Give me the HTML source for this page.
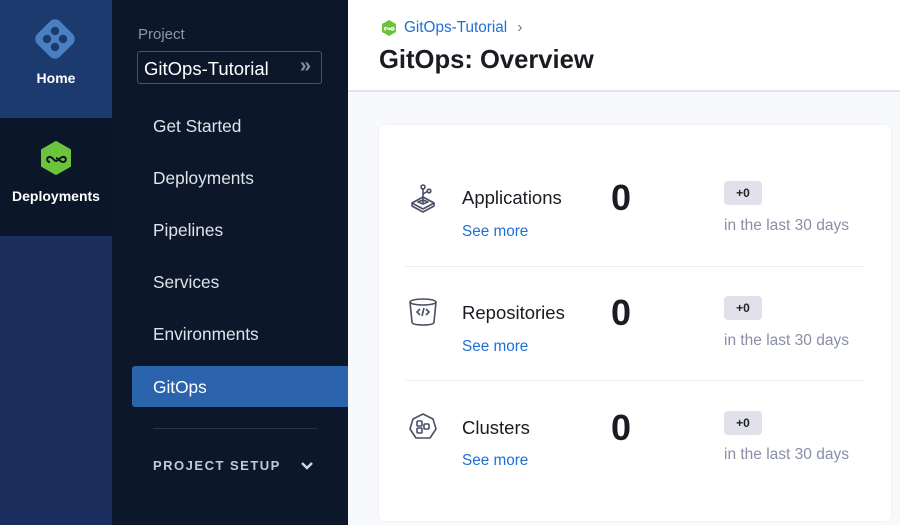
<!DOCTYPE html>
<html><head><meta charset="utf-8"><style>
*{margin:0;padding:0;box-sizing:border-box}
body{width:900px;height:525px;overflow:hidden;font-family:"Liberation Sans",sans-serif;background:#f8f9fc;position:relative}
.abs{position:absolute}
.rail{left:0;top:0;width:112px;height:525px;background:#1b2d5c}
.home{left:0;top:0;width:112px;height:118px;background:#1c3a6e}
.dep{left:0;top:118px;width:112px;height:118px;background:#0b1629}
.rl{color:#fff;font-weight:bold;font-size:14px;width:112px;text-align:center}
.side{left:112px;top:0;width:236px;height:525px;background:#0c1729}
.nav{left:153px;color:#dfe3ea;font-size:17.3px}
.main{left:348px;top:0;width:552px;height:92px;background:#fff;border-bottom:2px solid #e3e5ea}
.card{left:379px;top:125px;width:512px;height:396px;background:#fff;border-radius:6px;box-shadow:0 0 2px rgba(0,0,0,.08)}
.t{left:462px;font-size:18.5px;color:#1b1b22}
.sm{left:462px;font-size:15.3px;color:#1f6fd4}
.z{left:611px;font-size:36px;font-weight:bold;color:#1b1b22}
.bd{left:724px;width:38px;height:24px;background:#e0e1ea;border-radius:4px;font-size:12px;font-weight:bold;text-align:center;line-height:24px;color:#222}
.l30{left:724px;font-size:15.5px;color:#8a8ea5}
.hr{left:405px;width:460px;height:1px;background:#ececf0}
</style></head><body>
<div class="abs rail"></div>
<div class="abs home"></div>
<svg class="abs" style="left:34px;top:18px" width="42" height="42" viewBox="0 0 42 42"><rect x="5" y="5" width="32" height="32" rx="7" fill="#4a7fc1" transform="rotate(45 21 21)"/><g fill="#1c3a6e"><circle cx="21" cy="13" r="4.2"/><circle cx="21" cy="29" r="4.2"/><circle cx="13" cy="21" r="4.2"/><circle cx="29" cy="21" r="4.2"/></g></svg>
<div class="abs rl" style="top:70px">Home</div>
<div class="abs dep"></div>
<svg class="abs" style="left:38px;top:140px" width="36" height="36" viewBox="0 0 36 36"><path d="M18 2 L32 10 L32 26 L18 34 L4 26 L4 10Z" fill="#6bc43c" stroke="#6bc43c" stroke-width="2" stroke-linejoin="round"/><path d="M12 22c-3 0-4-4-1-5 3-1 5 4 7 4s5-5 8-4c3 1 2 5-1 5-3 0-5-4-7-4" fill="none" stroke="#0b1629" stroke-width="2"/></svg>
<div class="abs rl" style="top:188px">Deployments</div>
<div class="abs side"></div>
<div class="abs" style="left:138px;top:26px;color:#9096a3;font-size:15px">Project</div>
<div class="abs" style="left:137px;top:51px;width:185px;height:33px;border:1px solid #4a5264;border-radius:3px;color:#fff;font-size:18.5px;padding:6px 0 0 6px">GitOps-Tutorial<span style="position:absolute;right:10px;top:3px;color:#8a8fa0;font-size:20px;font-weight:bold">»</span></div>
<div class="abs nav" style="top:116px">Get Started</div>
<div class="abs nav" style="top:168px">Deployments</div>
<div class="abs nav" style="top:220px">Pipelines</div>
<div class="abs nav" style="top:272px">Services</div>
<div class="abs nav" style="top:324px">Environments</div>
<div class="abs" style="left:132px;top:366px;width:216px;height:41px;background:#2b64ad;border-radius:3px 0 0 3px"></div>
<div class="abs nav" style="top:377px;color:#fff">GitOps</div>
<div class="abs" style="left:153px;top:428px;width:164px;height:1px;background:#2a3446"></div>
<div class="abs" style="left:153px;top:458px;color:#c5cad5;font-size:13px;letter-spacing:1.5px;font-weight:bold">PROJECT SETUP</div>
<svg class="abs" style="left:300px;top:461px" width="14" height="10" viewBox="0 0 14 10"><path d="M2 2l5 5 5-5" fill="none" stroke="#d0d4dc" stroke-width="2.5"/></svg>
<div class="abs main"></div>
<svg class="abs" style="left:380px;top:19px" width="18" height="18" viewBox="0 0 36 36"><path d="M18 2 L32 10 L32 26 L18 34 L4 26 L4 10Z" fill="#6bc43c"/><path d="M12 22c-3 0-4-4-1-5 3-1 5 4 7 4s5-5 8-4c3 1 2 5-1 5-3 0-5-4-7-4" fill="none" stroke="#fff" stroke-width="2.5"/></svg>
<div class="abs" style="left:404px;top:19px;color:#1f6fd4;font-size:15.3px">GitOps-Tutorial <span style="color:#777;margin-left:6px">›</span></div>
<div class="abs" style="left:379px;top:46px;font-size:25.6px;font-weight:bold;color:#1b1b22">GitOps: Overview</div>
<div class="abs card"></div>
<svg class="abs" style="left:408px;top:183px" width="30" height="30" viewBox="0 0 30 30" fill="none" stroke="#4a4e66" stroke-width="1.6" stroke-linejoin="round"><path d="M4 20l11-6 11 6-11 6z"/><path d="M4 20v3l11 6 11-6v-3"/><path d="M15 21V5"/><circle cx="15" cy="4" r="2"/><path d="M15 11l5-3"/><circle cx="21" cy="8" r="1.8"/><path d="M10 19l5-2 5 2-5 2z"/></svg>
<div class="abs t" style="top:187px">Applications</div>
<div class="abs sm" style="top:223px">See more</div>
<div class="abs z" style="top:177px">0</div>
<div class="abs bd" style="top:181px">+0</div>
<div class="abs l30" style="top:217px">in the last 30 days</div>
<div class="abs hr" style="top:266px"></div>
<svg class="abs" style="left:407px;top:297px" width="32" height="32" viewBox="0 0 32 32" fill="none" stroke="#4a4e66" stroke-width="1.6"><ellipse cx="16" cy="5" rx="13" ry="3"/><path d="M3 5l2 20c0 2 4 3 11 3s11-1 11-3l2-20"/><path d="M13 12l-3 3 3 3M19 12l3 3-3 3M17 11l-2 8"/></svg>
<div class="abs t" style="top:302px">Repositories</div>
<div class="abs sm" style="top:338px">See more</div>
<div class="abs z" style="top:292px">0</div>
<div class="abs bd" style="top:296px">+0</div>
<div class="abs l30" style="top:332px">in the last 30 days</div>
<div class="abs hr" style="top:380px"></div>
<svg class="abs" style="left:408px;top:412px" width="30" height="30" viewBox="0 0 30 30" fill="none" stroke="#4a4e66" stroke-width="1.6" stroke-linejoin="round"><path d="M15 2l10 5 3 10-6 9H8l-6-9 3-10z"/><rect x="9" y="9" width="5" height="5" rx="1"/><rect x="9" y="16" width="5" height="5" rx="1"/><rect x="16" y="12" width="5" height="5" rx="1"/></svg>
<div class="abs t" style="top:417px">Clusters</div>
<div class="abs sm" style="top:452px">See more</div>
<div class="abs z" style="top:407px">0</div>
<div class="abs bd" style="top:411px">+0</div>
<div class="abs l30" style="top:446px">in the last 30 days</div>
</body></html>
